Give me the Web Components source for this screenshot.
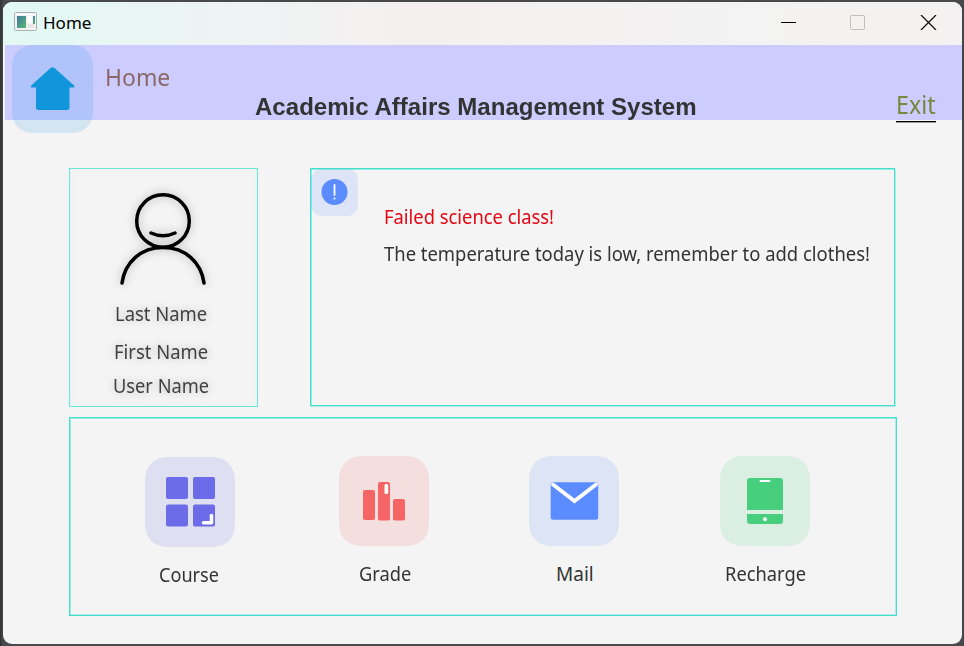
<!DOCTYPE html>
<html lang="en">
<head>
<meta charset="utf-8">
<title>Home</title>
<style>
html,body{margin:0;height:100%;overflow:hidden}
body{font-family:"Noto Sans","Open Sans",sans-serif;color:#333}
</style>
</head>
<body>
<app-window></app-window>
<script>
const define=(name,html,init)=>{
  const t=document.createElement('template');t.innerHTML=html;
  customElements.define(name,class extends HTMLElement{
    constructor(){super();this.attachShadow({mode:'open'}).append(t.content.cloneNode(true));}
    connectedCallback(){if(init)init(this,this.shadowRoot);}
  });
};

/* One line of text, condensed or widened to the ink width given in "w". */
define('fit-text',`<style>
:host{display:block;height:var(--lh,24px);line-height:var(--lh,24px);white-space:nowrap}
span{display:inline-block;transform-origin:0 50%}
</style><span><slot></slot></span>`,(el,root)=>{
  const s=root.querySelector('span'),w=+el.getAttribute('w');
  el.style.width=w+'px';
  s.style.transform='scaleX('+w/s.offsetWidth+')';
});

define('title-bar',`<style>
:host{display:flex;box-sizing:border-box;height:43px;padding:0 25px 0 11px;background:linear-gradient(90deg,#e3f9f3 0,#e6f7f4 9%,#eff3f3 26%,#f5f0f0 42%,#f4f1f1 60%,#f3f3f3 78%,#f4f2f0 90%,#f4f1f2)}
fit-text{margin:11px 0 0 5px;--lh:20px;font-size:17px;color:#000;flex:none}
.app{margin-top:10px;flex:none}
.ctl{margin-left:auto;display:flex;gap:54px;padding-top:13px}
svg{display:block}
</style>
<svg class="app" width="24" height="20"><defs><linearGradient id="g" x2="1" y2="1"><stop stop-color="#3f78a4"/><stop offset="1" stop-color="#5bb96d"/></linearGradient></defs>
<rect x=".5" y=".5" width="22" height="18" rx="1" fill="#f3f3f3" stroke="#a9b0b5"/><path d="M2 2.5h19" stroke="#fff" /><rect x="3" y="4" width="9" height="12" fill="url(#g)"/><rect x="13.5" y="4" width="4" height="7" fill="#fff"/><rect x="13.5" y="12" width="7" height="4" fill="#e7e7e7"/><rect x="19" y="4" width="2" height="8" fill="url(#g)"/></svg>
<fit-text w="48">Home</fit-text>
<div class="ctl">
<svg width="15" height="15"><path d="M0 7.5h15" stroke="#000"/></svg>
<svg width="15" height="15"><rect x=".5" y=".5" width="14" height="14" rx="1" fill="none" stroke="#bfbfbf"/></svg>
<svg width="18" height="15"><path d="M2 0l15 15M17 0l-15 15" stroke="#111" stroke-width="1.3"/></svg>
</div>`);

define('page-header',`<style>
:host{display:grid;grid-template-columns:81px 150px 1fr auto;height:75px;margin-left:2px;padding:0 26px 0 7px;background:#ccccff;align-items:start}
.tile{display:block;width:81px;height:88px}
.crumb{margin:17px 0 0 12px;--lh:30px;font-size:24px;color:#8c6767}
.name{margin:48px 0 0 12px;--lh:30px;font:bold 24px "Liberation Sans",Arial,sans-serif;color:#333}
.exit{margin-top:43px;--lh:32px;font-size:25px;color:#75893b;border-bottom:1px solid #000;padding-bottom:1px;box-shadow:0 1px #999}
</style>
<svg class="tile" viewBox="0 0 81 88"><path d="M22 0H59C74 0 81 10 81 22V66C81 79 73 88 59 88H22C8 88 0 79 0 66V22C0 10 7 0 22 0Z" fill="#1296db" fill-opacity=".15"/><path d="M38.500 23Q40.500 21.400 42.500 23L62 40.500Q63.200 42.500 61 42.500H57.500V62.500Q57.500 65 55 65H26.500Q24 65 24 62.500V42.500H20.500Q18 42.500 19.300 40.500Z" fill="#1296db"/></svg>
<fit-text class="crumb" w="65">Home</fit-text>
<fit-text class="name" w="442">Academic Affairs Management System</fit-text>
<fit-text class="exit" w="40">Exit</fit-text>`);

define('profile-card',`<style>
:host{display:flex;flex-direction:column;align-items:center;box-sizing:border-box;width:189px;height:239px;border:1px solid #68e6d8;padding:21px 5px 0 0;box-shadow:inset 0 0 10px rgba(64,224,208,.06);font-size:19px;color:#404040;text-shadow:0 0 9px #0004}
svg{display:block;width:90px;height:98px;margin-left:3px;filter:drop-shadow(0 0 5px #0004);flex:none}
fit-text{flex:none}
</style>
<svg viewBox="0 0 90 98" fill="none" stroke="#000" stroke-width="3.500" stroke-linecap="round"><circle cx="45" cy="31" r="26.300"/><path d="M33 43Q45 48.500 57 43M4 93C7 72 23 57.500 45 57.500S83 72 86 93"/></svg>
<fit-text style="margin-top:14px" w="92">Last Name</fit-text>
<fit-text style="margin-top:14px" w="94">First Name</fit-text>
<fit-text style="margin-top:10px" w="96">User Name</fit-text>`);

define('notice-card',`<style>
:host{display:grid;grid-template-columns:46px auto;column-gap:27px;box-sizing:border-box;width:585px;height:238px;border:1px solid #40e0d0;align-items:start;box-shadow:inset 1px 1px #40e0d080,1px 1px #40e0d060;font-size:19px}
svg{display:block;width:47px;height:47px}
.text{padding-top:36px;display:grid;gap:13px}
.red{color:#e30613}
</style>
<svg viewBox="0 0 47 47"><rect width="47" height="47" rx="11" fill="#5b8cff" fill-opacity=".15"/><circle cx="23.500" cy="23" r="13" fill="#5b8cff"/><path d="M23.500 16v10" stroke="#fff" stroke-width="1.800" stroke-linecap="round"/><circle cx="23.500" cy="29.500" r="1.100" fill="#fff"/></svg>
<div class="text"><fit-text class="red" w="170">Failed science class!</fit-text><fit-text w="486">The temperature today is low, remember to add clothes!</fit-text></div>`);

define('menu-item',`<style>
:host{display:flex;flex-direction:column;align-items:center;width:90px;font-size:19px}
svg{display:block;width:90px;height:90px}
fit-text{margin-top:16px}
</style><svg viewBox="0 0 90 90"><path class="bg" d="M24 0H66C82 0 90 10 90 24V66C90 81 82 90 66 90H24C8 90 0 81 0 66V24C0 10 8 0 24 0Z" fill-opacity=".15"/><g></g></svg><fit-text><slot></slot></fit-text>`,(el,r)=>{
  const icons={
    course:['#6c6ce8','<rect x="21" y="20" width="22" height="22" rx="2"/><rect x="48" y="20" width="22" height="22" rx="2"/><rect x="21" y="47.500" width="22" height="22" rx="2"/><rect x="48" y="47.500" width="22" height="22" rx="2"/><path d="M66.500 58.500V65.800H58.500" fill="none" stroke="#fff" stroke-width="3.600" stroke-linecap="round" stroke-linejoin="round"/>'],
    grade:['#f56565','<rect x="24" y="34" width="12" height="30" rx="2"/><rect x="39" y="26" width="12" height="38.500" rx="2"/><rect x="54" y="43" width="12" height="21.500" rx="2"/><rect x="45.500" y="28" width="3.700" height="10" rx="1.500" fill="#fff"/>'],
    mail:['#5b8cff','<rect x="21.700" y="26.300" width="47.500" height="37.500" rx="2.500"/><path d="M24 28.500L45.500 45 67 28.500" fill="none" stroke="#fff" stroke-width="3.800" stroke-linecap="round"/>'],
    phone:['#48cf7e','<path d="M27 54V25Q27 22 30 22H60Q63 22 63 25V54ZM27 58H63V65Q63 68 60 68H30Q27 68 27 65Z"/><path d="M40.500 25H49.500" stroke="#fff" stroke-width="2" stroke-linecap="round"/><circle cx="45" cy="63.300" r="2" fill="#fff"/>']};
  const [c,art]=icons[el.getAttribute('icon')];
  r.querySelector('svg').setAttribute('fill',c);
  r.querySelector('g').innerHTML=art;
  const label=r.querySelector('fit-text'),w=+el.getAttribute('w');
  label.style.width=w+'px';
  label.style.marginLeft=(el.getAttribute('shift')||0)+'px';
  const s=label.shadowRoot.querySelector('span');
  s.style.transform='none';
  s.style.transform='scaleX('+w/s.offsetWidth+')';
});

define('menu-card',`<style>
:host{display:flex;box-sizing:border-box;width:828px;height:199px;border:1px solid #40e0d0;box-shadow:inset 1px 1px #40e0d080,inset -1px -1px #40e0d060;padding:38px 0 0 75px}
menu-item{flex:none}
</style>
<menu-item icon="course" w="60" shift="-2" style="margin-top:1px">Course</menu-item>
<menu-item icon="grade" w="52" shift="1" style="margin-left:104px">Grade</menu-item>
<menu-item icon="mail" w="38" shift="2" style="margin-left:100px">Mail</menu-item>
<menu-item icon="phone" w="81" style="margin-left:101px">Recharge</menu-item>`);

define('app-window',`<style>
:host{display:block;box-sizing:border-box;width:964px;height:646px;padding:2px 2px 2px 3px;background:linear-gradient(90deg,#303133 0,#48494b 3px,#48494b 961px,#414447)}
main{height:642px;border-radius:9px;overflow:hidden;background:#f4f4f4}
.body{display:grid;grid-template-columns:189px 586px;column-gap:52px;row-gap:10px;padding:48px 0 0 66px}
menu-card{grid-column:1/3}
</style><main><title-bar></title-bar><page-header></page-header><div class="body"><profile-card></profile-card><notice-card></notice-card><menu-card></menu-card></div></main>`);
</script>
</body>
</html>
